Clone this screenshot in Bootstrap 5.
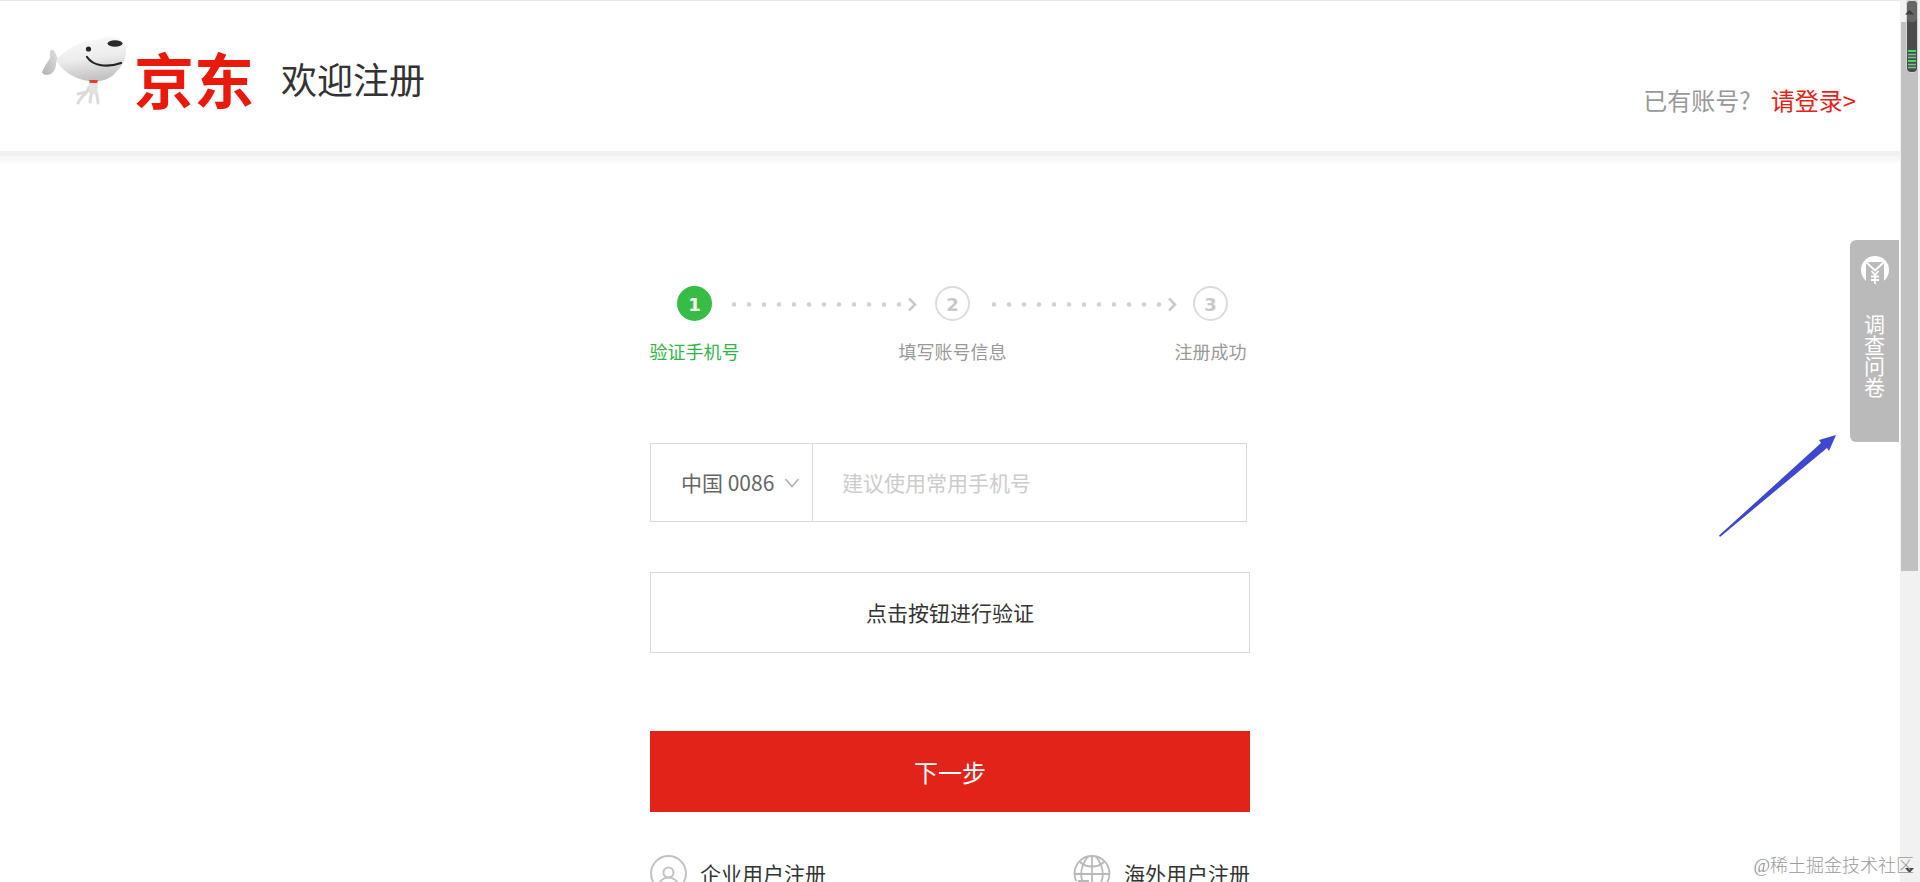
<!DOCTYPE html>
<html lang="zh-CN">
<head>
<meta charset="utf-8">
<meta name="viewport" content="width=device-width, initial-scale=1">
<title>欢迎注册</title>
<link href="https://cdn.jsdelivr.net/npm/bootstrap@5.3.0/dist/css/bootstrap.min.css" rel="stylesheet">
<style>
  body { font-family: "Noto Sans CJK SC", sans-serif; color: #333; background: #fff; overflow: hidden; }
  a { text-decoration: none; color: #333; }
  .page-view { min-width: 0; }
  .site-header { border-top: 1px solid #e8e8e8; min-height: 151px; padding: 32px 44px 0 38px; }
  .under-header { height: 12px; background: linear-gradient(#f0f0f0 0 4px, #f5f5f5 5px, #fcfcfc); }
  .mascot { margin-bottom: 16px; }
  .brand-name { font-size: 60px; line-height: 88px; font-weight: 700; color: #e9190b; margin-left: 6px; }
  .welcome { font-size: 36px; line-height: 88px; font-weight: 400; margin-left: 27px; }
  .login-line { font-size: 24px; line-height: 36px; color: #999; margin-top: 49px; gap: 20px; }
  .login-line a { color: #e2231a; }
  .signup { max-width: 600px; padding-top: 123px; }
  .step-list { padding: 0 22px 0 27px; margin-bottom: 78px; }
  .step-item { width: 35px; font-size: 18px; line-height: 28px; color: #999; gap: 16px; }
  .step-num { width: 35px; height: 35px; border: 2px solid #dcdcdc; color: #c8c8c8; font: 700 18px/34px "DejaVu Sans", sans-serif; text-align: center; }
  .step-item.current { color: #33b345; }
  .current .step-num { background: #37bd45; border-color: #37bd45; color: #fff; }
  .step-line { height: 35px; }
  .field { border: 1px solid #d9d9d9; height: 79px; width: 597px; max-width: 100%; margin-bottom: 50px; }
  .field select, .field input { border: 0; border-radius: 0; background-color: transparent; font-size: 21px; padding: 0; outline: 0; }
  .field select { appearance: none; flex: 0 0 162px; padding-left: 30px; color: #666; border-right: 1px solid #d9d9d9;
    background: url("data:image/svg+xml,%3Csvg xmlns='http://www.w3.org/2000/svg' width='16' height='12'%3E%3Cpath d='M1.500 2l6.500 7.500L14.500 2' fill='none' stroke='%23b0b0b0' stroke-width='1.500'/%3E%3C/svg%3E") no-repeat right 12px center; }
  .field input { padding-left: 29px; min-width: 0; }
  .field input::placeholder { color: #ccc; opacity: 1; }
  .wide-btn { height: 81px; border-radius: 0; font-size: 21px; }
  .verify-btn, .verify-btn:hover { border: 1px solid #d9d9d9; color: #333; margin-bottom: 78px; }
  .next-btn, .next-btn:hover { background: #e2231a; border: 0; color: #fff; font-size: 24px; margin-bottom: 43px; }
  .other-links { font-size: 21px; line-height: 36px; }
  .other-links a { gap: 13px; }
  .survey-tab { top: 240px; right: 1px; width: 49px; height: 202px; background: #bababa; border-radius: 6px 0 0 6px; padding-top: 16px; gap: 28px; color: #fff; font-size: 21px; line-height: 22px; }
  .survey-tab span { writing-mode: vertical-rl; }
  .pointer-arrow { top: 434px; right: 63px; }
  .scroll-rail { width: 20px; background: #f1f1f1; padding: 22px 2px 0 1px; }
  .scroll-thumb { height: 549px; background: #c1c1c1; }
  .meter { top: 0; right: 2px; }
  .scroll-down { right: 6px; bottom: 8px; }
  .site-mark { right: 6px; bottom: 2px; font: 300 18px/27px "Liberation Serif", "Noto Sans CJK SC", serif; color: #999; }
</style>
</head>
<body>
<div class="d-flex vh-100 overflow-hidden position-relative">
  <div class="page-view flex-fill position-relative">
    <header class="site-header d-flex justify-content-between align-items-start">
      <div class="d-flex align-items-center">
        <a href="#" class="d-flex align-items-center" aria-label="京东">
          <svg class="mascot" width="90" height="74" viewBox="0 0 90 74" aria-hidden="true">
            <defs>
              <linearGradient id="fur" x1="0" y1="0" x2=".2" y2="1"><stop offset="0" stop-color="#fafafa"/><stop offset=".55" stop-color="#ececec"/><stop offset="1" stop-color="#c4c4c4"/></linearGradient>
              <linearGradient id="tail" x1="1" y1="0" x2="0" y2="1"><stop offset="0" stop-color="#e2e2e2"/><stop offset="1" stop-color="#b2b2b2"/></linearGradient>
            </defs>
            <path d="M19 24L17 19C15 15 11 17 12 21C13 26 9 29 7 33L4 39C5 43 12 43 15 39C20 34 16 28 21 26Z" fill="url(#tail)"/>
            <path d="M51 54C50 60 42 64 40 70M54 56L52 69M57 55C58 61 60 64 60 70M49 59L40 61" fill="none" stroke="#dadada" stroke-width="3" stroke-linecap="round"/>
            <path d="M51 48H60L59 62L51 60Z" fill="#e2e2e2"/>
            <path d="M18 27C27 16 43 8 58 7C74 1 88 5 88 16C89 25 85 32 79 38C73 46 62 50 52 48C37 47 23 37 18 27Z" fill="url(#fur)"/>
            <circle cx="50.500" cy="16" r="2.600" fill="#252525"/>
            <ellipse cx="77" cy="10.500" rx="7.500" ry="3.300" fill="#292929"/>
            <path d="M49 24C55 33 69 35 83 30" fill="none" stroke="#222" stroke-width="2.200" stroke-linecap="round"/>
            <path d="M51 47L60 47L59 50L52 50Z" fill="#e43b32"/>
          </svg>
          <span class="brand-name">京东</span>
        </a>
        <h1 class="welcome mb-0">欢迎注册</h1>
      </div>
      <div class="login-line d-flex"><span>已有账号?</span><a href="#">请登录&gt;</a></div>
    </header>
    <div class="under-header"></div>

    <main class="signup mx-auto">
      <ol class="step-list list-unstyled d-flex">
        <li class="step-item current d-flex flex-column align-items-center"><span class="step-num rounded-circle flex-shrink-0">1</span><span class="text-nowrap">验证手机号</span></li>
        <li class="step-line flex-fill" aria-hidden="true">
          <svg width="100%" height="35" viewBox="0 0 223 35"><path d="M22 18.500H190" stroke="#d0d0d0" stroke-width="4.500" stroke-linecap="round" stroke-dasharray="0 15"/><path d="M197 12.500L203 18.500L197 24.500" fill="none" stroke="#cacaca" stroke-width="2.500"/></svg>
        </li>
        <li class="step-item d-flex flex-column align-items-center"><span class="step-num rounded-circle flex-shrink-0">2</span><span class="text-nowrap">填写账号信息</span></li>
        <li class="step-line flex-fill" aria-hidden="true">
          <svg width="100%" height="35" viewBox="0 0 223 35"><path d="M24 18.500H192" stroke="#d0d0d0" stroke-width="4.500" stroke-linecap="round" stroke-dasharray="0 15"/><path d="M199 12.500L205 18.500L199 24.500" fill="none" stroke="#cacaca" stroke-width="2.500"/></svg>
        </li>
        <li class="step-item d-flex flex-column align-items-center"><span class="step-num rounded-circle flex-shrink-0">3</span><span class="text-nowrap">注册成功</span></li>
      </ol>

      <form>
        <div class="field d-flex">
          <select aria-label="国家和地区代码"><option>中国 0086</option></select>
          <input class="flex-fill" type="tel" placeholder="建议使用常用手机号" aria-label="手机号">
        </div>
        <button type="button" class="btn wide-btn verify-btn d-block w-100">点击按钮进行验证</button>
        <button type="button" class="btn wide-btn next-btn d-block w-100">下一步</button>
      </form>

      <nav class="other-links d-flex justify-content-between" aria-label="其他注册方式">
        <a href="#" class="d-flex">
          <svg width="37" height="37" viewBox="0 0 37 37" fill="none" stroke="#c2c2c2" stroke-width="2" aria-hidden="true"><circle cx="18.500" cy="18.500" r="17.500"/><circle cx="18.500" cy="17.500" r="5"/><path d="M8 33C9 19 28 19 29 33"/></svg>
          <span>企业用户注册</span>
        </a>
        <a href="#" class="d-flex">
          <svg width="38" height="37" viewBox="0 0 38 37" fill="none" stroke="#b9b9b9" stroke-width="1.800" aria-hidden="true"><circle cx="19" cy="18.500" r="17.500"/><path d="M1.500 19H36.500M19 1V36M7 7C13 13 25 13 31 7M15 1.500C6 13 6 24 14 35M23 1.500C32 13 32 24 24 35"/><path d="M2 26H15V37H2Z" fill="#fff" stroke="none"/><path d="M5 26H15V30"/></svg>
          <span>海外用户注册</span>
        </a>
      </nav>
    </main>

    <a href="#" class="survey-tab position-absolute d-flex flex-column align-items-center">
      <svg width="30" height="30" viewBox="0 0 30 30" class="flex-shrink-0" aria-hidden="true"><circle cx="15" cy="14" r="14" fill="#fff"/><path d="M6 6H24V30H6Z" fill="#bababa"/><path d="M6 6L15 14.500L24 6M11.500 15L15 19L18.500 15M15 19V28M11 20.500H19M11 24H19" fill="none" stroke="#fff" stroke-width="1.800"/></svg>
      <span>调查问卷</span>
    </a>
    <svg class="pointer-arrow position-absolute" width="119" height="104" viewBox="0 0 119 104" aria-hidden="true"><path d="M1 101.500L103 9L101 6L118 1L111 17L109 14L2 103Z" fill="#3f48cc"/></svg>
  </div>

  <div class="scroll-rail flex-shrink-0" aria-hidden="true"><div class="scroll-thumb"></div></div>
  <svg class="meter position-absolute" width="14" height="74" viewBox="0 0 14 74" aria-hidden="true">
    <rect x="2" y="-3" width="12" height="76" rx="6" fill="#d5d5d5"/><rect x="3" y="1" width="10" height="71" rx="4" fill="#4b4b4b"/><rect x="3" y="1" width="10" height="21" rx="4" fill="#666"/>
    <path d="M1 14.500L5.500 10L10 14.500Z" fill="#3c3c3c"/>
    <path d="M4 51H12M4 61H12" stroke="#40d866" stroke-width="2"/><path d="M4 54.500H12M4 57.500H12M4 64.500H12M4 67.500H12" stroke="#79c58c" stroke-width="1.500"/>
  </svg>
  <svg class="scroll-down position-absolute" width="9" height="6" viewBox="0 0 9 6" aria-hidden="true"><path d="M0 0H9L4.500 5Z" fill="#444"/></svg>
  <div class="site-mark position-absolute">@稀土掘金技术社区</div>
</div>
<script src="https://cdn.jsdelivr.net/npm/bootstrap@5.3.0/dist/js/bootstrap.bundle.min.js"></script>
</body>
</html>
